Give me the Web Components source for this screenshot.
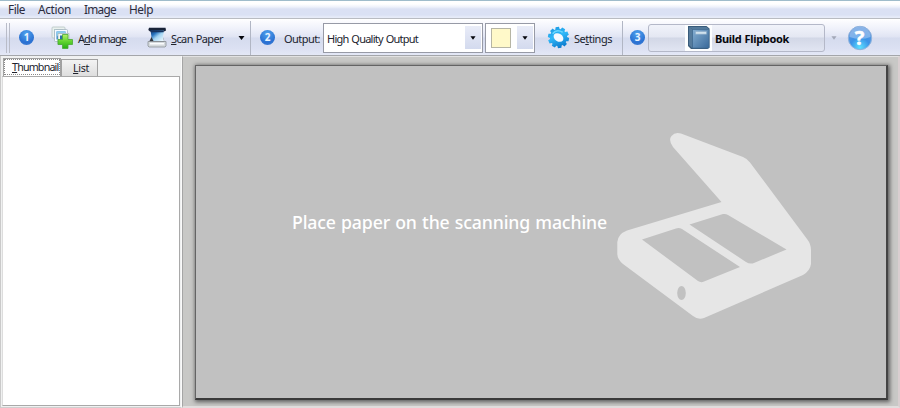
<!DOCTYPE html>
<html lang="en"><head><meta charset="utf-8"><title>Flipbook scanner</title>
<style>html,body{margin:0;height:100%;overflow:hidden}body{font:11px "Noto Sans",sans-serif;color:#20232d}</style></head>
<body>
<scan-app></scan-app>
<script>
const define=(name,html,init)=>customElements.define(name,class extends HTMLElement{
  connectedCallback(){
    if(this.shadowRoot)return;
    const t=document.createElement('template');t.innerHTML=html;
    this.attachShadow({mode:'open'}).append(t.content.cloneNode(true));
    if(init)init(this,this.shadowRoot);
  }
});

/* A single-line label whose tracking is adjusted to fill the width in "w". */
define('fit-label',`<style>:host{display:block;white-space:nowrap;flex:none}span{display:inline-block;word-spacing:.7px}u{text-underline-offset:1px;text-decoration-thickness:1px}</style><span></span>`,(h,r)=>{
  const s=r.querySelector('span'),t=h.getAttribute('text'),k=h.getAttribute('key');
  const i=k?t.indexOf(k):-1;
  if(i<0)s.textContent=t;else{const u=document.createElement('u');u.textContent=k;s.append(t.slice(0,i),u,t.slice(i+1));}
  const w=+h.getAttribute('w');
  h.style.width=w+'px';
  s.style.letterSpacing=((w-s.getBoundingClientRect().width)/t.length)+'px';
});

define('step-badge',`<style>:host{display:grid;place-items:center;flex:none;width:15px;height:15px;border-radius:50%;background:radial-gradient(circle at 50% 25%,#4fa3ee,#2a70d2 65%,#4583d4);color:#eaf4ff;font:bold 10px/15px "Open Sans",sans-serif;position:relative;top:-.5px}</style><slot></slot>`);

define('drop-arrow',`<style>:host{display:block;flex:none;width:7px;height:4px;color:#05060c}svg{display:block;width:100%}</style><svg width="7" height="4" viewBox="0 0 7 4"><path d="M.5 0h6L3.500 4z" fill="currentColor"/></svg>`);

define('menu-bar',`<style>
:host{display:flex;box-sizing:border-box;height:19px;flex:none;padding-left:8px;border-top:1px solid #9fbccb;background:linear-gradient(#fff 0 3px,#eef1fb 6px,#dbe1f4 8px,#dae1f4 14px,#e6ebf8 16px);border-bottom:1px solid #b9bcc2;font-size:11.8px;line-height:17px;color:#2b2c3c}
fit-label+fit-label{margin-left:13px}</style>
<fit-label text="File" w="17"></fit-label><fit-label text="Action" w="33"></fit-label><fit-label text="Image" w="32"></fit-label><fit-label text="Help" w="24"></fit-label>`);

define('icon-add',`<style>:host{display:block;width:22px;height:23px;flex:none}svg{display:block}</style>
<svg width="22" height="23" viewBox="0 0 22 23"><defs><linearGradient id="g" x2="0" y2="1"><stop stop-color="#b5ef6c"/><stop offset=".5" stop-color="#62d430"/><stop offset="1" stop-color="#25ad12"/></linearGradient></defs>
<rect x="1" y="1" width="13" height="11" rx="1" fill="#eaf1ef" stroke="#b5c4c1" stroke-width=".8"/><rect x="3" y="3" width="9" height="7" fill="#a9ccc3"/>
<rect x="3.500" y="3.500" width="13" height="12" rx="1" fill="#f6faff" stroke="#a5b5bf" stroke-width=".8"/><path d="M5.500 5.500h9v8h-9z" fill="#2482ca"/><path d="M5.500 11q4-5 9-3V5.500h-9z" fill="#8ecdf0"/>
<path d="M7 7.500h11v11H7z" fill="#f2f7f5" stroke="#a5b5b3" stroke-width=".7"/><path d="M9 9.500h4v6H9z" fill="#286fa4"/>
<path d="M11.500 8.500h5.500v5h4.500v5H17v4h-5.500v-4H7v-5h4.500z" fill="url(#g)" stroke="#4aa932" stroke-width=".8" stroke-linejoin="round"/></svg>`);

define('icon-scan',`<style>:host{display:block;width:20px;height:21px;flex:none}svg{display:block}</style>
<svg width="20" height="21" viewBox="0 0 20 21"><defs><linearGradient id="g" x2="1" y2="1"><stop stop-color="#173b72"/><stop offset=".3" stop-color="#2572bd"/><stop offset=".55" stop-color="#a3d5f3"/><stop offset="1" stop-color="#f3fbff"/></linearGradient></defs>
<path d="M2 .8h16.500l.5 2.700-2 1H3L1.300 3z" fill="#192338"/><path d="M5 9L2 15h15.500L15.500 9z" fill="#30363e"/><path d="M3.500 3.500H17l-1 6 1 4.500H6.500l-2-4z" fill="url(#g)"/><path d="M3.500 3.500H17l-.4 1.800H4z" fill="#173460"/>
<path d="M1 14.500h18v4.500l-1 1H2l-1-1z" fill="#d5dadd" stroke="#8b9297" stroke-width=".8"/><path d="M3 16h14v1.500H3z" fill="#fafcfd"/></svg>`);

define('icon-gear',`<style>:host{display:block;width:23px;height:23px;flex:none}svg{display:block}</style>
<svg width="23" height="23" viewBox="-11.5 -11.5 23 23"><defs><linearGradient id="g" x2=".7" y2="1"><stop stop-color="#1590dc"/><stop offset=".5" stop-color="#30b8f8"/><stop offset="1" stop-color="#0876cb"/></linearGradient></defs>
<g transform="rotate(12)" fill="url(#g)"></g></svg>`,(h,r)=>{
  const g=r.querySelector('g');let d='';
  for(let i=0;i<10;i++){const a=i*Math.PI/5;[[8.6,-.27],[10.7,-.17],[10.7,.15],[8.6,.24]].forEach(([q,o],j)=>{d+=(i||j?'L':'M')+(q*Math.cos(a+o)).toFixed(2)+' '+(q*Math.sin(a+o)).toFixed(2)});}
  g.innerHTML='<path d="'+d+'Z"/><ellipse rx="5.300" ry="3.800" transform="rotate(22)" fill="#f4f9ff"/><path d="M-6.500-2.500Q-4-8 3-6" fill="none" stroke="#6ad8ff" stroke-width="1.500"/>';
});

define('icon-book',`<style>:host{display:block;width:27px;height:26px;flex:none;background:#fdfeff}svg{display:block}</style>
<svg width="27" height="26" viewBox="0 0 27 26"><defs><linearGradient id="g" x2="1" y2="1"><stop stop-color="#86afd2"/><stop offset="1" stop-color="#39699a"/></linearGradient></defs>
<path d="M3 1h18.500l3 2.500v19l-2 1.500H6l-3-3z" fill="#385b7b"/><path d="M4 2l3 2v19l-3-3z" fill="#567b9c"/><path d="M7.500 4.500H24v18.500H7.500z" fill="url(#g)" stroke="#416b92" stroke-width=".7"/><path d="M4 2h17.500l2.500 2.300H7.500z" fill="#53799a"/><path d="M10.500 6.500h11v2.700h-11z" fill="#d0e1ed" stroke="#88a9c6" stroke-width=".5"/></svg>`);

define('help-button',`<style>:host{display:block;width:26px;height:26px;flex:none}svg{display:block}</style>
<svg width="26" height="26"><defs><radialGradient id="g" cy=".9" r=".75"><stop stop-color="#5ce0ff"/><stop offset=".55" stop-color="#3b93e8"/><stop offset="1" stop-color="#5d95dc"/></radialGradient></defs><circle cx="13" cy="13" r="11.700" fill="url(#g)" stroke="#8fb2dc"/><path d="M2.500 12a10.500 10.500 0 0 1 21 0q-10 4-21 0" fill="#b3d2f3" opacity=".5"/><text x="12.500" y="20" text-anchor="middle" font-family="Noto Sans" font-weight="700" font-size="20" fill="#fff" stroke="#fff" stroke-width=".5">?</text></svg>`);

define('combo-box',`<style>:host{display:flex;box-sizing:border-box;flex:none;height:30px;border:1px solid #979aa6;background:#fff;align-items:center;padding:0 1px 0 3px;justify-content:space-between}.b{display:grid;place-items:center;width:16px;height:23px;background:linear-gradient(#e9ecf8,#d3daee)}</style><slot></slot><span class="b"><drop-arrow style="width:6px"></drop-arrow></span>`);

define('tool-bar',`<style>
:host{display:flex;align-items:center;box-sizing:border-box;flex:none;height:37px;background:linear-gradient(#fdfdff,#eff1fa 9px,#e0e4f3 17px,#d5dbee 18px,#dbe0f2 28px,#e4e8f6);border-bottom:1px solid #a4a6aa;border-top:1px solid #fff;padding-left:6px}
.grip{width:2px;height:30px;border:solid #b9bcc8;border-width:0 1px;flex:none}
.sep{width:1px;height:34px;background:#b1b6c4;flex:none}
.sw{box-sizing:border-box;width:20px;height:20px;border:1px solid #b6b5a5;background:#fff9c9;margin-left:2px}
.build{display:flex;box-sizing:border-box;align-items:center;width:177px;height:28px;margin-left:3px;border:1px solid #b4b8c8;border-radius:3px;padding-left:36px;background:linear-gradient(#f1f3fa,#e4e7f2 12px,#d2d7e6 13px,#e1e5f2);color:#07080d;font-weight:700}
fit-label{position:relative;top:1px}
</style>
<span class="grip"></span>
<step-badge style="margin-left:9px">1</step-badge><icon-add style="margin-left:17px"></icon-add><fit-label style="margin-left:5px" text="Add image" key="d" w="48"></fit-label>
<icon-scan style="margin-left:21px"></icon-scan><fit-label style="margin-left:4px" text="Scan Paper" key="S" w="52"></fit-label><drop-arrow style="margin-left:15px"></drop-arrow>
<span class="sep" style="margin-left:5px"></span><step-badge style="margin-left:9px">2</step-badge><fit-label style="margin-left:9px;top:.5px" text="Output:" w="36"></fit-label>
<combo-box style="margin-left:3px;width:160px"><fit-label style="top:.5px" text="High Quality Output" w="91"></fit-label></combo-box>
<combo-box style="margin-left:2px;width:50px"><span class="sw"></span></combo-box>
<icon-gear style="margin-left:12px"></icon-gear><fit-label style="margin-left:4px" text="Settings" key="t" w="38"></fit-label>
<span class="sep" style="margin-left:10px"></span><step-badge style="margin-left:7px">3</step-badge>
<div class="build"><icon-book></icon-book><fit-label style="margin-left:3px;top:.5px" text="Build Flipbook" w="74"></fit-label></div>
<drop-arrow style="margin-left:6px;width:6px;color:#a3a8b8"></drop-arrow><help-button style="margin-left:10px"></help-button>`);

define('thumb-panel',`<style>
:host{display:flex;flex-direction:column;box-sizing:border-box;width:182px;flex:none;background:#f0f1f1;border-left:1px solid #cacaca;border-right:1px solid #fafafa;padding:2px 1px 1px 1px;border-bottom:1px solid #cfcfcf}
.tabs{display:flex;align-items:flex-end;height:18px;flex:none;padding-left:1px;font-size:10.700px}
.tab{box-sizing:border-box;border:1px solid #a1a1a1;border-bottom:0;height:17px}
.on{width:58px;height:18px;padding:1px;background:#fff}.on fit-label{outline:1px dotted #8a8a8a;line-height:14px;padding-left:7px;height:14px}
.off{width:37px;background:linear-gradient(#f3f3f3,#dedede);padding:1px 0 0 11px;line-height:15px}
.list{flex:1;background:#fff;border:1px solid #a9a9a9;border-left-color:#ddd}
</style><div class="tabs"><div class="tab on"><fit-label text="Thumbnail" key="T" w="46.500"></fit-label></div><div class="tab off"><fit-label text="List" key="L" w="16"></fit-label></div></div><div class="list"></div>`);

define('scan-stage',`<style>
:host{display:flex;box-sizing:border-box;flex:1;background:#c8c8c6;border-left:1px solid #a5a5a5;border-top:1px solid #e2e2e2;border-bottom:2px solid #e2dede;border-right:2px solid #d9ced0;padding:8px 10px 6px 12px}
.page{display:flex;flex:1;box-sizing:border-box;background:#c1c1c1;border:1px solid #646464;border-right:2px solid #444;border-bottom:2px solid #3a3a3a;box-shadow:1px 1px 4px 1px #5e5e5e;padding:66px 0 0 96px}
fit-label{font:500 17.700px/24px "Noto Sans",sans-serif;color:#fff;margin-top:78px}
svg{display:block;flex:none;margin-left:10px}
</style><div class="page"><fit-label text="Place paper on the scanning machine" w="315"></fit-label>
<svg width="196" height="188" viewBox="617 132 196 188"><path fill="#e6e6e6" d="M681 133.500L743 157Q747 158.500 750 162.500L807 239Q811 244 811 250V264Q810 271 803 275L704 318Q698 320 693 316L623 264Q617 259 617.300 253V242Q618 234 627 230.500L721.500 202L673 147Q668 140 671.500 136Q675 131.500 681 133.500Z"/>
<g fill="#c1c1c1"><path d="M642 239.500L676 228.500Q679 227.500 682 229L740 267L704 281.500Q701 283 698 281Z"/><path d="M689.500 224.500L723 214Q726 213.500 728 215L786.500 249.500L754 263Q750 264.500 746 262Z"/><ellipse cx="681.500" cy="293" rx="4.300" ry="7"/></g></svg></div>`);

define('scan-app',`<style>:host{display:flex;flex-direction:column;width:900px;height:408px;background:#e9e9e9;overflow:hidden}main{display:flex;flex:1;min-height:0}</style><menu-bar></menu-bar><tool-bar></tool-bar><main><thumb-panel></thumb-panel><scan-stage></scan-stage></main>`);
</script></body></html>
